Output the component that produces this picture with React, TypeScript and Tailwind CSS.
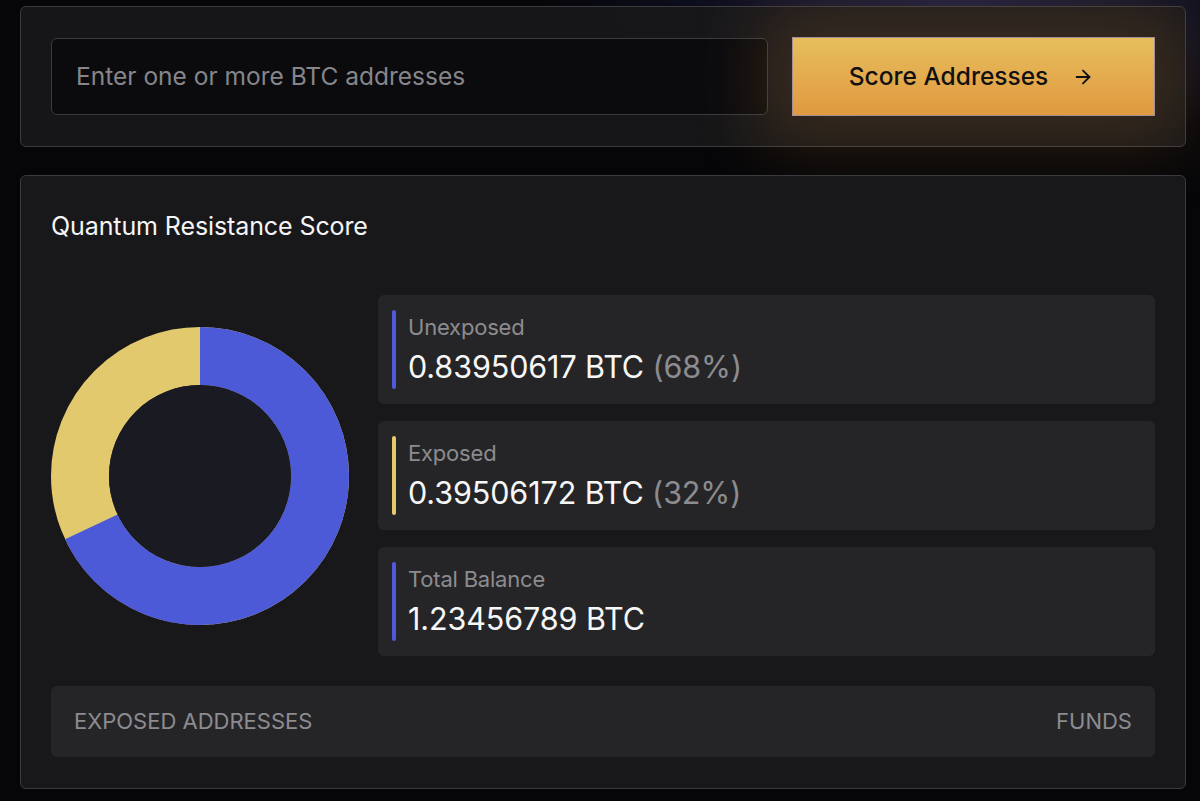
import React from "react";
import { ArrowRight } from "lucide-react";

type Stat = {
  label: string;
  value: string;
  pct?: string;
  bar: string;
};

const stats: Stat[] = [
  { label: "Unexposed", value: "0.83950617 BTC", pct: "(68%)", bar: "bg-[#4f5ad8]" },
  { label: "Exposed", value: "0.39506172 BTC", pct: "(32%)", bar: "bg-[#e5c96c]" },
  { label: "Total Balance", value: "1.23456789 BTC", bar: "bg-[#4f5ad8]" },
];

function Donut() {
  const r = 120;
  const c = 2 * Math.PI * r;
  const unexposed = 0.68;
  return (
    <svg width="298" height="298" viewBox="0 0 298 298" className="shrink-0">
      <g transform="rotate(-90 149 149)">
        <circle cx="149" cy="149" r={r} fill="none" stroke="#e3c96e" strokeWidth="58" />
        <circle
          cx="149"
          cy="149"
          r={r}
          fill="none"
          stroke="#4c5ad7"
          strokeWidth="58"
          strokeDasharray={`${c * unexposed} ${c}`}
        />
      </g>
      <circle cx="149" cy="149" r="91" fill="#1a1b22" />
    </svg>
  );
}

function StatCard({ s }: { s: Stat }) {
  return (
    <div className="flex h-[109px] rounded-[6px] bg-[#252527] pl-[14px] pt-[15px]">
      <div className={`h-[79px] w-[4px] shrink-0 rounded-full ${s.bar}`} />
      <div className="ml-[12px] flex flex-col pt-[3px]">
        <div className="text-[22px] leading-[28px] tracking-[-0.2px] text-[#8c8c90]">{s.label}</div>
        <div className="mt-[6px] text-[30.5px] leading-[40px] tracking-[-0.1px] text-[#f7f7f7]">
          {s.value}
          {s.pct && <span className="text-[#8c8c90]"> {s.pct}</span>}
        </div>
      </div>
    </div>
  );
}

export default function App() {
  return (
    <div
      className="min-h-[801px] w-full bg-[#060609] pl-[20px] pr-[14px] pt-[6px] pb-[10px] font-['Inter',sans-serif]"
      style={{
        backgroundImage:
          "radial-gradient(ellipse 420px 150px at 960px 0px, rgba(40,46,110,0.55), rgba(6,6,9,0) 100%)",
      }}
    >
      {/* address entry */}
      <div className="flex items-center gap-[24px] rounded-[6px] border border-[#3b3b3f] bg-[#18181b]/90 p-[30px]">
        <div className="flex h-[77px] flex-1 items-center rounded-[6px] border border-[#3a3a3e] bg-[#0b0b0e] pl-[24px]">
          <span className="text-[24.5px] text-[#86868a]">Enter one or more BTC addresses</span>
        </div>
        <button className="flex h-[79px] w-[363px] items-center justify-center gap-[24px] border border-[#a48f98] bg-gradient-to-b from-[#e6be5c] to-[#e0993f] pr-[4px] text-[24.5px] font-medium text-[#111111] shadow-[0_0_70px_30px_rgba(200,130,50,0.2)]">
          <span>Score Addresses</span>
          <ArrowRight size={22} strokeWidth={2} />
        </button>
      </div>

      {/* score panel */}
      <div className="relative mt-[28px] rounded-[6px] border border-[#3b3b3f] bg-[#18181b] px-[30px] pt-[30px] pb-[31px]">
        <h2 className="text-[25px] leading-[40px] tracking-[-0.1px] text-[#f5f5f5]">Quantum Resistance Score</h2>

        <div className="mt-[49px] flex items-center gap-[29px]">
          <Donut />
          <div className="flex flex-1 flex-col gap-[17px]">
            {stats.map((s) => (
              <StatCard key={s.label} s={s} />
            ))}
          </div>
        </div>

        <div className="mt-[30px] flex h-[71px] items-center justify-between rounded-[6px] bg-[#252527] px-[23px] text-[22px] uppercase text-[#8c8c90]">
          <span>Exposed Addresses</span>
          <span>Funds</span>
        </div>
      </div>
    </div>
  );
}
